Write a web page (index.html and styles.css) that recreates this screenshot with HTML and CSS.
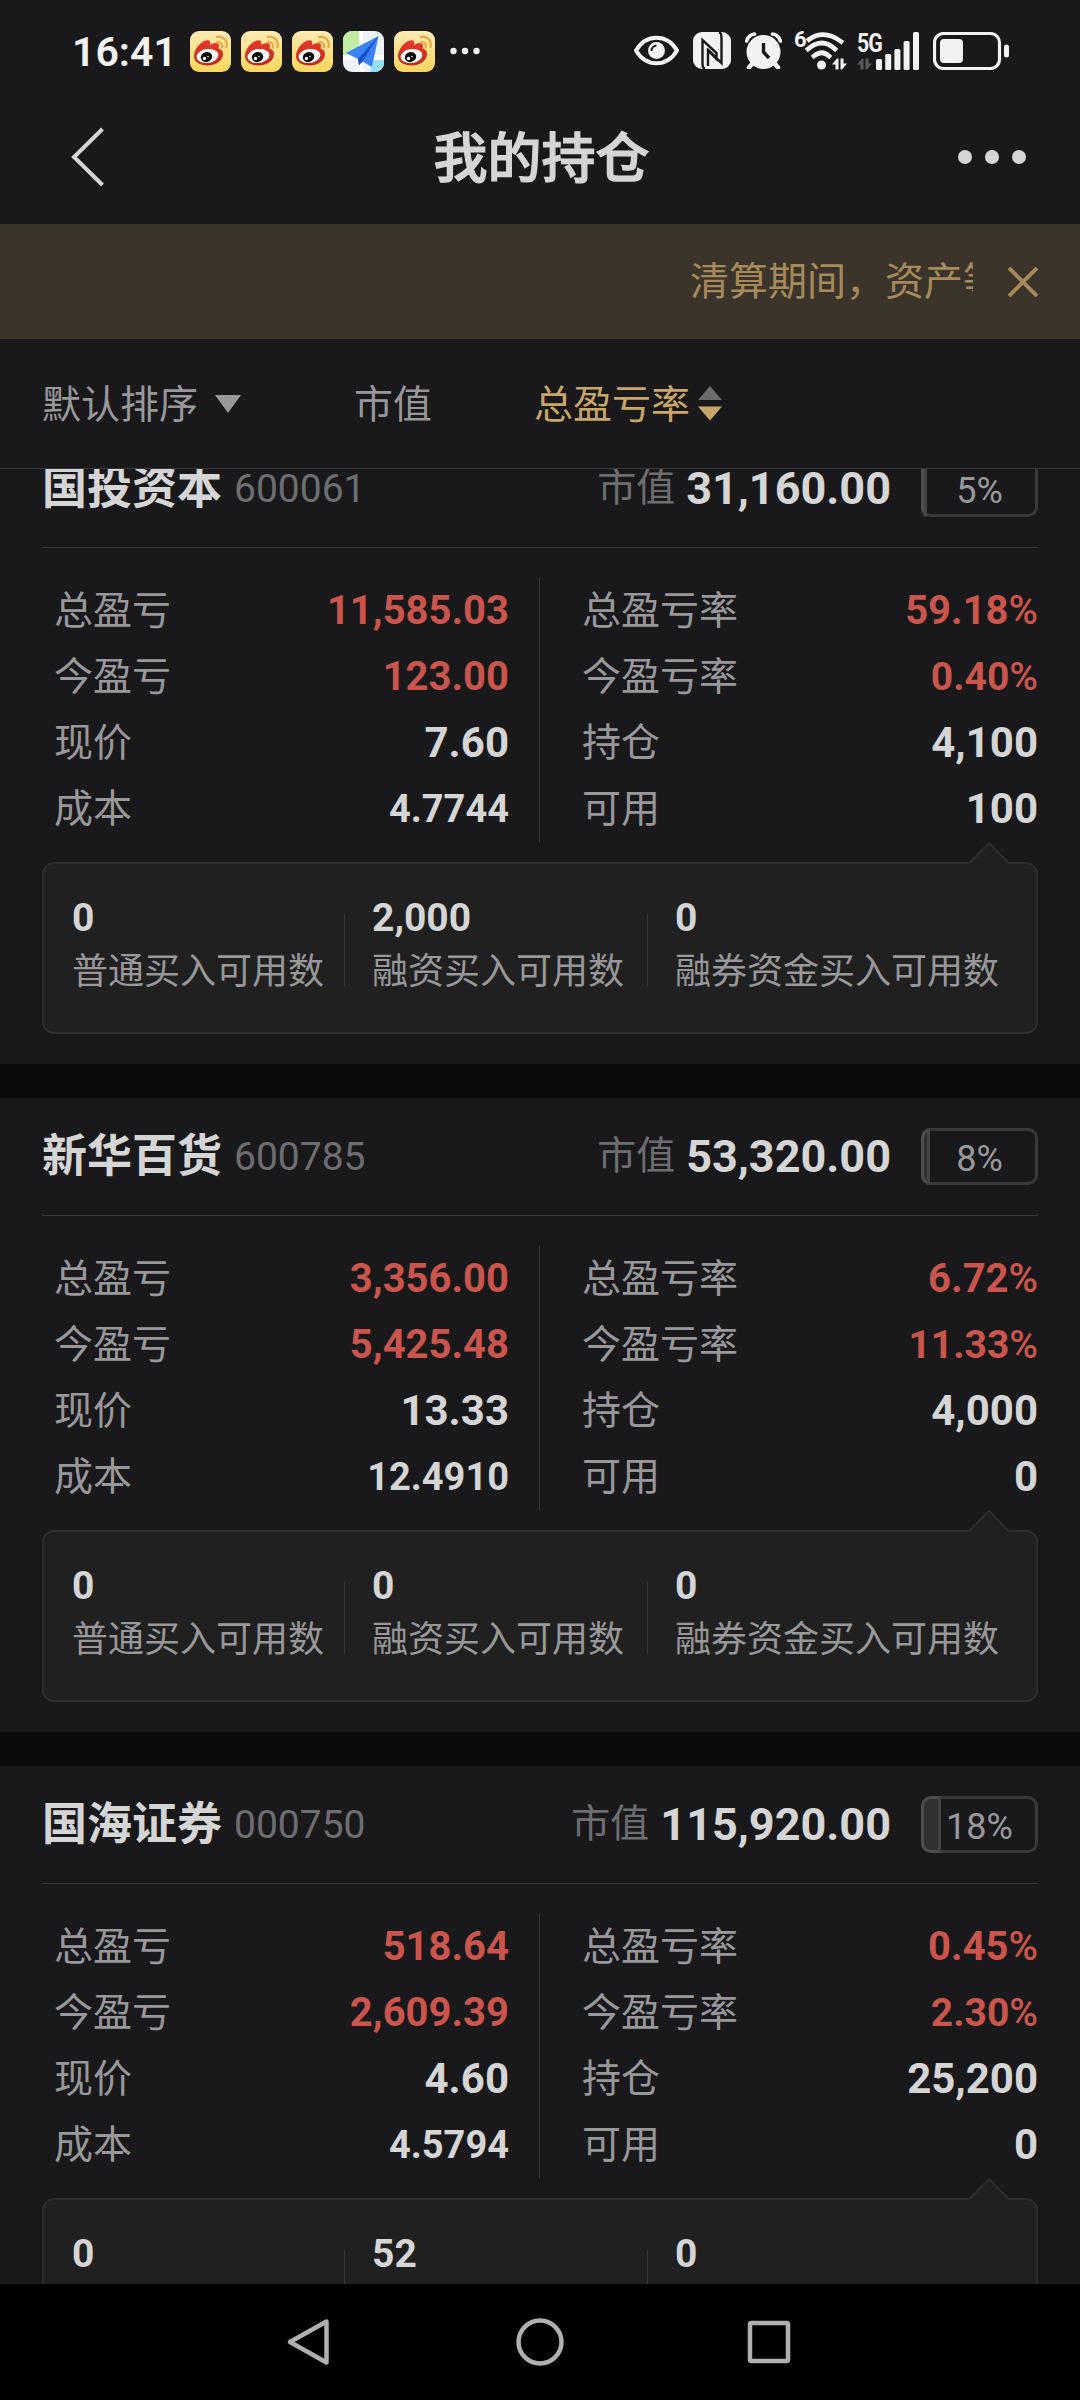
FILE: index.html
```html
<!DOCTYPE html>
<html lang="zh-CN">
<head>
    <meta charset="UTF-8">
    <meta name="viewport" content="width=device-width, initial-scale=1.0">
    <title>我的持仓</title>
    <link rel="stylesheet" href="styles.css">
</head>
<body>
    <!-- Iconos compartidos -->
    <svg class="sprite" width="0" height="0">
        <defs>
            <linearGradient id="weibo-bg" x1="0" y1="0" x2="0" y2="1">
                <stop offset="0" stop-color="#fdebb4"/>
                <stop offset="1" stop-color="#f9d65c"/>
            </linearGradient>
            <linearGradient id="weibo-red" x1="0" y1="0" x2="0" y2="1">
                <stop offset="0" stop-color="#e8392b"/>
                <stop offset="1" stop-color="#b92a1d"/>
            </linearGradient>
            <clipPath id="map-clip"><rect width="41" height="41" rx="9"/></clipPath>
            <symbol id="weibo" viewBox="0 0 41 41">
                <rect width="41" height="41" rx="9" fill="url(#weibo-bg)"/>
                <path d="M4 25C4 18 11 10 17 9.300C20 9 21 11 20 14C23 12 27 11 28.500 13C29.500 15 28.500 17 28.500 17.500C31.500 18.500 33 20 33 23C33 30 25 34.500 17.500 34.500C10 34.500 4 31 4 25Z" fill="url(#weibo-red)"/>
                <ellipse cx="17.500" cy="25" rx="11" ry="7" transform="rotate(-8 17.500 25)" fill="#fff"/>
                <ellipse cx="16.500" cy="26" rx="5.800" ry="5" transform="rotate(-15 16.500 26)" fill="#0a0a0a"/>
                <circle cx="14.500" cy="27.500" r="1.700" fill="#fff"/>
                <circle cx="18" cy="25.500" r=".8" fill="#fff"/>
                <path d="M27 6C33 4.500 38 9.500 36.500 16M27 11.300C30.500 10.500 32.500 13 31.800 16.500" fill="none" stroke="#eba94a" stroke-width="2.400" stroke-linecap="round"/>
            </symbol>
            <symbol id="data-arrows" viewBox="0 0 15 12">
                <path d="M0 6.500L5 .5H6.500V11.500H3.500V6.500ZM8.500 .5H11.500V5.500H15L10 11.500H8.500Z" fill="currentColor"/>
            </symbol>
        </defs>
    </svg>

    <div class="status-bar">
        <span class="time">16:41</span>
        <div class="notifications">
            <svg width="41" height="41"><use href="#weibo"/></svg>
            <svg width="41" height="41"><use href="#weibo"/></svg>
            <svg width="41" height="41"><use href="#weibo"/></svg>
            <svg width="41" height="41" viewBox="0 0 41 41">
                <g clip-path="url(#map-clip)">
                    <rect width="41" height="41" fill="#eef2f6"/>
                    <path d="M0 0H16V16L0 26Z" fill="#c0eda3"/>
                    <path d="M31 29H41V41H27Z" fill="#96defd"/>
                    <path d="M16 0H20V41H16ZM0 24H41V29H0Z" fill="#fff"/>
                    <path d="M3 22L35.500 5L29 36L19.500 30.500L16 34L15 28Z" fill="#3a83f7"/>
                    <path d="M35.500 5L15 28L16 34L19.500 30.500Z" fill="#1c50c8"/>
                </g>
            </svg>
            <svg width="41" height="41"><use href="#weibo"/></svg>
        </div>
        <svg class="more" width="30" height="8" viewBox="0 0 30 8" fill="#f2f2f2">
            <circle cx="3.500" cy="4" r="3.200"/><circle cx="15" cy="4" r="3.200"/><circle cx="26.500" cy="4" r="3.200"/>
        </svg>

        <div class="system-icons">
            <!-- Protección visual -->
            <svg width="45" height="37" viewBox="0 0 45 37">
                <path d="M2 18.500C12 1.500 33 1.500 43 18.500C33 35.500 12 35.500 2 18.500Z" fill="none" stroke="#f2f2f2" stroke-width="4" stroke-linejoin="round"/>
                <circle cx="22.500" cy="18.500" r="8.500" fill="#f2f2f2"/>
                <path d="M17.500 19A5.500 5.500 0 0 1 22.500 13.500" fill="none" stroke="#19191b" stroke-width="2"/>
            </svg>
            <!-- NFC -->
            <svg class="nfc" width="38" height="37" viewBox="0 0 38 37">
                <rect width="38" height="37" rx="9" fill="#f2f2f2"/>
                <path d="M12 37C9 36 9.500 33 9.500 30V8L23.500 21V27L15 18.500V34M26 0C29 1 28.500 4 28.500 7V31L14.500 17" fill="none" stroke="#19191b" stroke-width="2.400"/>
            </svg>
            <!-- Alarma -->
            <svg class="alarm" width="37" height="37" viewBox="0 0 37 37">
                <circle cx="18.500" cy="20" r="17" fill="#f2f2f2"/>
                <path d="M1.500 9C3 5 5.500 2.500 9.500 2M27.500 2C31.500 2.500 34 5 35.500 9" fill="none" stroke="#f2f2f2" stroke-width="3.600" stroke-linecap="round"/>
                <path d="M7 32L4 35.500M30 32L33 35.500" stroke="#f2f2f2" stroke-width="4.500" stroke-linecap="round"/>
                <path d="M18.500 11V20L24 26" fill="none" stroke="#19191b" stroke-width="3.400"/>
            </svg>
            <div class="wifi">
                <span class="wifi-gen">6</span>
                <svg width="43" height="39" viewBox="0 0 43 39">
                    <path d="M5 8.500Q20 -2 37 10.500M4 18Q18 6 31 18M10 25Q18 18.500 25 25" fill="none" stroke="#f2f2f2" stroke-width="4.600" stroke-linecap="square" stroke-linejoin="round"/>
                    <circle cx="17.500" cy="34" r="4.500" fill="#f2f2f2"/>
                </svg>
                <svg class="arrows" width="15" height="12"><use href="#data-arrows"/></svg>
            </div>
            <div class="signal">
                <span class="signal-gen">5G</span>
                <svg class="arrows" width="15" height="12"><use href="#data-arrows"/></svg>
                <svg class="signal-bars" width="43" height="38" viewBox="0 0 43 38" fill="#f2f2f2">
                    <rect x="0" y="27" width="6" height="11" rx="1.500"/>
                    <rect x="9.200" y="22" width="6" height="16" rx="1.500"/>
                    <rect x="18.400" y="17" width="6" height="21" rx="1.500"/>
                    <rect x="27.600" y="9" width="6" height="29" rx="1.500"/>
                    <rect x="37" y="0" width="6" height="38" rx="1.500"/>
                </svg>
            </div>
            <svg class="battery" width="76" height="38" viewBox="0 0 76 38">
                <rect x="1.500" y="1.500" width="65" height="35" rx="9" fill="none" stroke="#f2f2f2" stroke-width="3.200"/>
                <rect x="7" y="7" width="23" height="24" rx="4" fill="#f2f2f2"/>
                <rect x="71" y="12.500" width="5" height="13" rx="2.500" fill="#f2f2f2"/>
            </svg>
        </div>
    </div>

    <header class="header">
        <svg class="back" width="36" height="60" viewBox="0 0 36 60">
            <path d="M33.500 2L5 30L33.500 58" fill="none" stroke="#d5d5d5" stroke-width="4"/>
        </svg>
        <h1 class="title">我的持仓</h1>
        <svg class="menu" width="68" height="14" viewBox="0 0 68 14" fill="#d5d5d5">
            <circle cx="7" cy="7" r="7"/><circle cx="34" cy="7" r="7"/><circle cx="61" cy="7" r="7"/>
        </svg>
    </header>

    <div class="notice">
        <div class="notice-text">清算期间，资产等</div>
        <svg class="notice-close" width="30" height="30" viewBox="0 0 30 30">
            <path d="M1 1L29 29M29 1L1 29" stroke="#a68a5b" stroke-width="4"/>
        </svg>
    </div>

    <div class="filters">
        <div class="filter filter-default">
            <span>默认排序</span>
            <svg width="26" height="18" viewBox="0 0 26 18"><path d="M0 0H26L13 18Z" fill="#98989a"/></svg>
        </div>
        <div class="filter filter-value"><span>市值</span></div>
        <div class="filter filter-rate">
            <span>总盈亏率</span>
            <svg width="24" height="35" viewBox="0 0 24 35">
                <path d="M12 0L24 14H0Z" fill="#6c6c6e"/>
                <path d="M0 20.500H24L12 34.500Z" fill="#c6a669"/>
            </svg>
        </div>
    </div>

    <main class="list">
        <section class="card">
            <div class="card-header">
                <h2 class="name">国投资本</h2>
                <span class="code">600061</span>
                <span class="value-label">市值</span>
                <span class="value">31,160.00</span>
                <div class="ratio"><div class="ratio-bar" style="width: 5%"></div><span>5%</span></div>
            </div>
            <div class="stats">
                <div class="stats-col">
                    <div class="row"><span>总盈亏</span><b class="up">11,585.03</b></div>
                    <div class="row"><span>今盈亏</span><b class="up">123.00</b></div>
                    <div class="row"><span>现价</span><b class="big">7.60</b></div>
                    <div class="row"><span>成本</span><b>4.7744</b></div>
                </div>
                <div class="stats-col">
                    <div class="row"><span>总盈亏率</span><b class="up">59.18<i>%</i></b></div>
                    <div class="row"><span>今盈亏率</span><b class="up today">0.40<i>%</i></b></div>
                    <div class="row"><span>持仓</span><b class="big">4,100</b></div>
                    <div class="row"><span>可用</span><b class="big">100</b></div>
                </div>
            </div>
            <div class="panel">
                <svg class="panel-arrow" width="40" height="23" viewBox="0 0 40 23">
                    <path d="M0 23V21.500L20 1L40 21.500V23Z" fill="#202020"/>
                    <path d="M0 21.500L20 1L40 21.500" fill="none" stroke="#2e2e2f" stroke-width="2"/>
                </svg>
                <div class="cell"><b>0</b><span>普通买入可用数</span></div>
                <div class="cell"><b>2,000</b><span>融资买入可用数</span></div>
                <div class="cell"><b>0</b><span>融券资金买入可用数</span></div>
            </div>
        </section>

        <section class="card">
            <div class="card-header">
                <h2 class="name">新华百货</h2>
                <span class="code">600785</span>
                <span class="value-label">市值</span>
                <span class="value">53,320.00</span>
                <div class="ratio"><div class="ratio-bar" style="width: 8%"></div><span>8%</span></div>
            </div>
            <div class="stats">
                <div class="stats-col">
                    <div class="row"><span>总盈亏</span><b class="up">3,356.00</b></div>
                    <div class="row"><span>今盈亏</span><b class="up">5,425.48</b></div>
                    <div class="row"><span>现价</span><b class="big">13.33</b></div>
                    <div class="row"><span>成本</span><b>12.4910</b></div>
                </div>
                <div class="stats-col">
                    <div class="row"><span>总盈亏率</span><b class="up">6.72<i>%</i></b></div>
                    <div class="row"><span>今盈亏率</span><b class="up today">11.33<i>%</i></b></div>
                    <div class="row"><span>持仓</span><b class="big">4,000</b></div>
                    <div class="row"><span>可用</span><b class="big">0</b></div>
                </div>
            </div>
            <div class="panel">
                <svg class="panel-arrow" width="40" height="23" viewBox="0 0 40 23">
                    <path d="M0 23V21.500L20 1L40 21.500V23Z" fill="#202020"/>
                    <path d="M0 21.500L20 1L40 21.500" fill="none" stroke="#2e2e2f" stroke-width="2"/>
                </svg>
                <div class="cell"><b>0</b><span>普通买入可用数</span></div>
                <div class="cell"><b>0</b><span>融资买入可用数</span></div>
                <div class="cell"><b>0</b><span>融券资金买入可用数</span></div>
            </div>
        </section>

        <section class="card">
            <div class="card-header">
                <h2 class="name">国海证券</h2>
                <span class="code">000750</span>
                <span class="value-label">市值</span>
                <span class="value">115,920.00</span>
                <div class="ratio"><div class="ratio-bar" style="width: 18%"></div><span>18%</span></div>
            </div>
            <div class="stats">
                <div class="stats-col">
                    <div class="row"><span>总盈亏</span><b class="up">518.64</b></div>
                    <div class="row"><span>今盈亏</span><b class="up">2,609.39</b></div>
                    <div class="row"><span>现价</span><b class="big">4.60</b></div>
                    <div class="row"><span>成本</span><b>4.5794</b></div>
                </div>
                <div class="stats-col">
                    <div class="row"><span>总盈亏率</span><b class="up">0.45<i>%</i></b></div>
                    <div class="row"><span>今盈亏率</span><b class="up today">2.30<i>%</i></b></div>
                    <div class="row"><span>持仓</span><b class="big">25,200</b></div>
                    <div class="row"><span>可用</span><b class="big">0</b></div>
                </div>
            </div>
            <div class="panel">
                <svg class="panel-arrow" width="40" height="23" viewBox="0 0 40 23">
                    <path d="M0 23V21.500L20 1L40 21.500V23Z" fill="#202020"/>
                    <path d="M0 21.500L20 1L40 21.500" fill="none" stroke="#2e2e2f" stroke-width="2"/>
                </svg>
                <div class="cell"><b>0</b></div>
                <div class="cell"><b>52</b></div>
                <div class="cell"><b>0</b></div>
            </div>
        </section>
    </main>

    <nav class="nav-bar">
        <svg width="48" height="48" viewBox="0 0 48 48"><path d="M40.500 3.500V44.500L4 24Z"/></svg>
        <svg width="48" height="48" viewBox="0 0 48 48"><circle cx="24" cy="24" r="21.500"/></svg>
        <svg width="48" height="48" viewBox="0 0 48 48"><rect x="4" y="5" width="38" height="38" rx="1.500"/></svg>
    </nav>
</body>
</html>
```
FILE: styles.css
```css
/* Reset y estilos base */
* {
    margin: 0;
    padding: 0;
    box-sizing: border-box;
}

body {
    width: 1080px;
    height: 2400px;
    overflow: hidden;
    display: flex;
    flex-direction: column;
    font-family: Roboto, "Noto Sans CJK SC", sans-serif;
    font-size: 39px;
    line-height: 1;
    color: #98989a;
    background-color: #19191b;
}

svg {
    display: block;
    flex-shrink: 0;
}

.sprite {
    position: absolute;
}

/* Barra de estado */
.status-bar {
    height: 100px;
    padding: 1px 71px 0 72px;
    display: flex;
    align-items: center;
    color: #f2f2f2;
}

.time {
    width: 118px;
    padding-top: 4px;
    font-size: 41px;
    font-weight: 600;
    white-space: nowrap;
}

.notifications {
    display: flex;
    gap: 10px;
    margin-top: 2px;
}

.more {
    margin-left: 15px;
}

.system-icons {
    display: flex;
    align-items: center;
    margin-left: auto;
}

.nfc {
    margin-left: 14px;
}

.alarm {
    margin-left: 14px;
}

.wifi {
    position: relative;
    display: flex;
    width: 52px;
    margin-left: 13px;
    padding-left: 9px;
}

.wifi-gen {
    position: absolute;
    left: -1px;
    top: -2px;
    font-size: 22px;
    font-weight: 700;
}

.wifi .arrows {
    position: absolute;
    right: 0;
    bottom: 0;
}

.signal {
    position: relative;
    width: 62px;
    height: 38px;
    margin-left: 10px;
}

.signal-gen {
    position: absolute;
    left: 0;
    top: -1px;
    font-size: 25px;
    font-weight: 700;
    letter-spacing: -1px;
    transform: scaleX(0.85);
    transform-origin: left;
}

.signal .arrows {
    position: absolute;
    left: 0;
    bottom: 0;
    color: #5a5a5c;
}

.signal-bars {
    position: absolute;
    right: 0;
    top: 0;
}

.battery {
    margin-left: 14px;
}

/* Cabecera */
.header {
    height: 124px;
    padding: 0 54px 10px 69px;
    display: flex;
    align-items: center;
    justify-content: space-between;
    color: #d5d5d5;
}

.back {
    margin-right: 20px;
}

.title {
    padding-top: 6px;
    font-size: 54px;
    font-weight: 500;
    -webkit-text-stroke: 1.2px #d5d5d5;
}

/* Aviso */
.notice {
    height: 115px;
    padding: 0 42px 0 690px;
    display: flex;
    align-items: center;
    justify-content: space-between;
    background-color: #3b342a;
    color: #a68a5b;
}

.notice-text {
    width: 283px;
    line-height: 60px;
    overflow: hidden;
    white-space: nowrap;
}

/* Filtros */
.filters {
    height: 130px;
    padding-left: 42px;
    display: flex;
    align-items: center;
    border-bottom: 1px solid #39393b;
}

.filter {
    display: flex;
    align-items: center;
}

.filter span {
    padding-top: 4px;
}

.filter-default {
    width: 312px;
    gap: 17px;
}

.filter-value {
    width: 180px;
}

.filter-rate {
    gap: 8px;
    color: #c6a669;
}

/* Lista de posiciones */
.list {
    flex: 1;
    min-height: 0;
    overflow: hidden;
    background-color: #0b0b0b;
}

.card {
    height: 634px;
    margin-bottom: 34px;
    padding: 0 42px;
    background-color: #19191b;
}

.card:first-child {
    margin-top: -39px;
}

.card-header {
    height: 118px;
    display: flex;
    align-items: center;
    border-bottom: 1px solid #39393b;
}

.name {
    font-size: 45px;
    font-weight: 700;
    color: #d5d5d5;
}

.code {
    margin-left: 12px;
    padding-top: 1px;
    color: #6e6e70;
}

.value-label {
    margin-left: auto;
    color: #6e6e70;
}

.value {
    margin-left: 11px;
    font-size: 45px;
    font-weight: 700;
    color: #d5d5d5;
}

.ratio {
    position: relative;
    width: 117px;
    height: 57px;
    margin-left: 30px;
    display: flex;
    align-items: center;
    justify-content: center;
    border: 3px solid #39393b;
    border-radius: 10px;
    font-size: 36px;
}

.ratio span {
    padding-top: 4px;
}

.ratio-bar {
    position: absolute;
    left: -3px;
    top: -3px;
    height: 57px;
    min-width: 6px;
    background-color: rgba(255, 255, 255, 0.1);
    border-right: 3px solid #434345;
    border-radius: 10px 0 0 10px;
}

.stats {
    display: flex;
    margin-top: 30px;
}

.stats-col {
    flex: 1;
    padding-left: 42px;
}

.stats-col:first-child {
    flex: none;
    width: 498px;
    padding: 0 30px 0 12px;
    border-right: 1px solid #39393b;
}

.row {
    height: 66px;
    display: flex;
    align-items: center;
    justify-content: space-between;
}

.row b {
    font-size: 38px;
    font-weight: 700;
    color: #d5d5d5;
}

.row i {
    font-style: normal;
    font-weight: 500;
}

.row .up {
    font-size: 40px;
    color: #c9554c;
}

.row .today {
    font-size: 39px;
}

.row .big {
    font-size: 42px;
}

/* Panel de cantidades disponibles */
.panel {
    position: relative;
    height: 172px;
    margin-top: 20px;
    display: flex;
    background-color: #202020;
    border: 2px solid #2e2e2f;
    border-radius: 12px;
}

.panel-arrow {
    position: absolute;
    right: 27px;
    top: -22px;
}

.cell {
    position: relative;
    width: 303px;
    padding: 35px 0 0 28px;
    font-size: 36px;
    white-space: nowrap;
}

.cell:first-of-type {
    width: 300px;
}

.cell + .cell::before {
    content: "";
    position: absolute;
    left: 0;
    top: 50px;
    width: 1px;
    height: 72px;
    background-color: #39393b;
}

.cell b {
    display: block;
    margin-bottom: 16px;
    font-size: 39px;
    font-weight: 700;
    color: #d5d5d5;
}

/* Barra de navegación */
.nav-bar {
    height: 116px;
    display: flex;
    align-items: center;
    justify-content: center;
    gap: 182px;
    background-color: #000;
}

.nav-bar svg {
    fill: none;
    stroke: #b0b0b0;
    stroke-width: 4.500;
    stroke-linejoin: round;
}
```
